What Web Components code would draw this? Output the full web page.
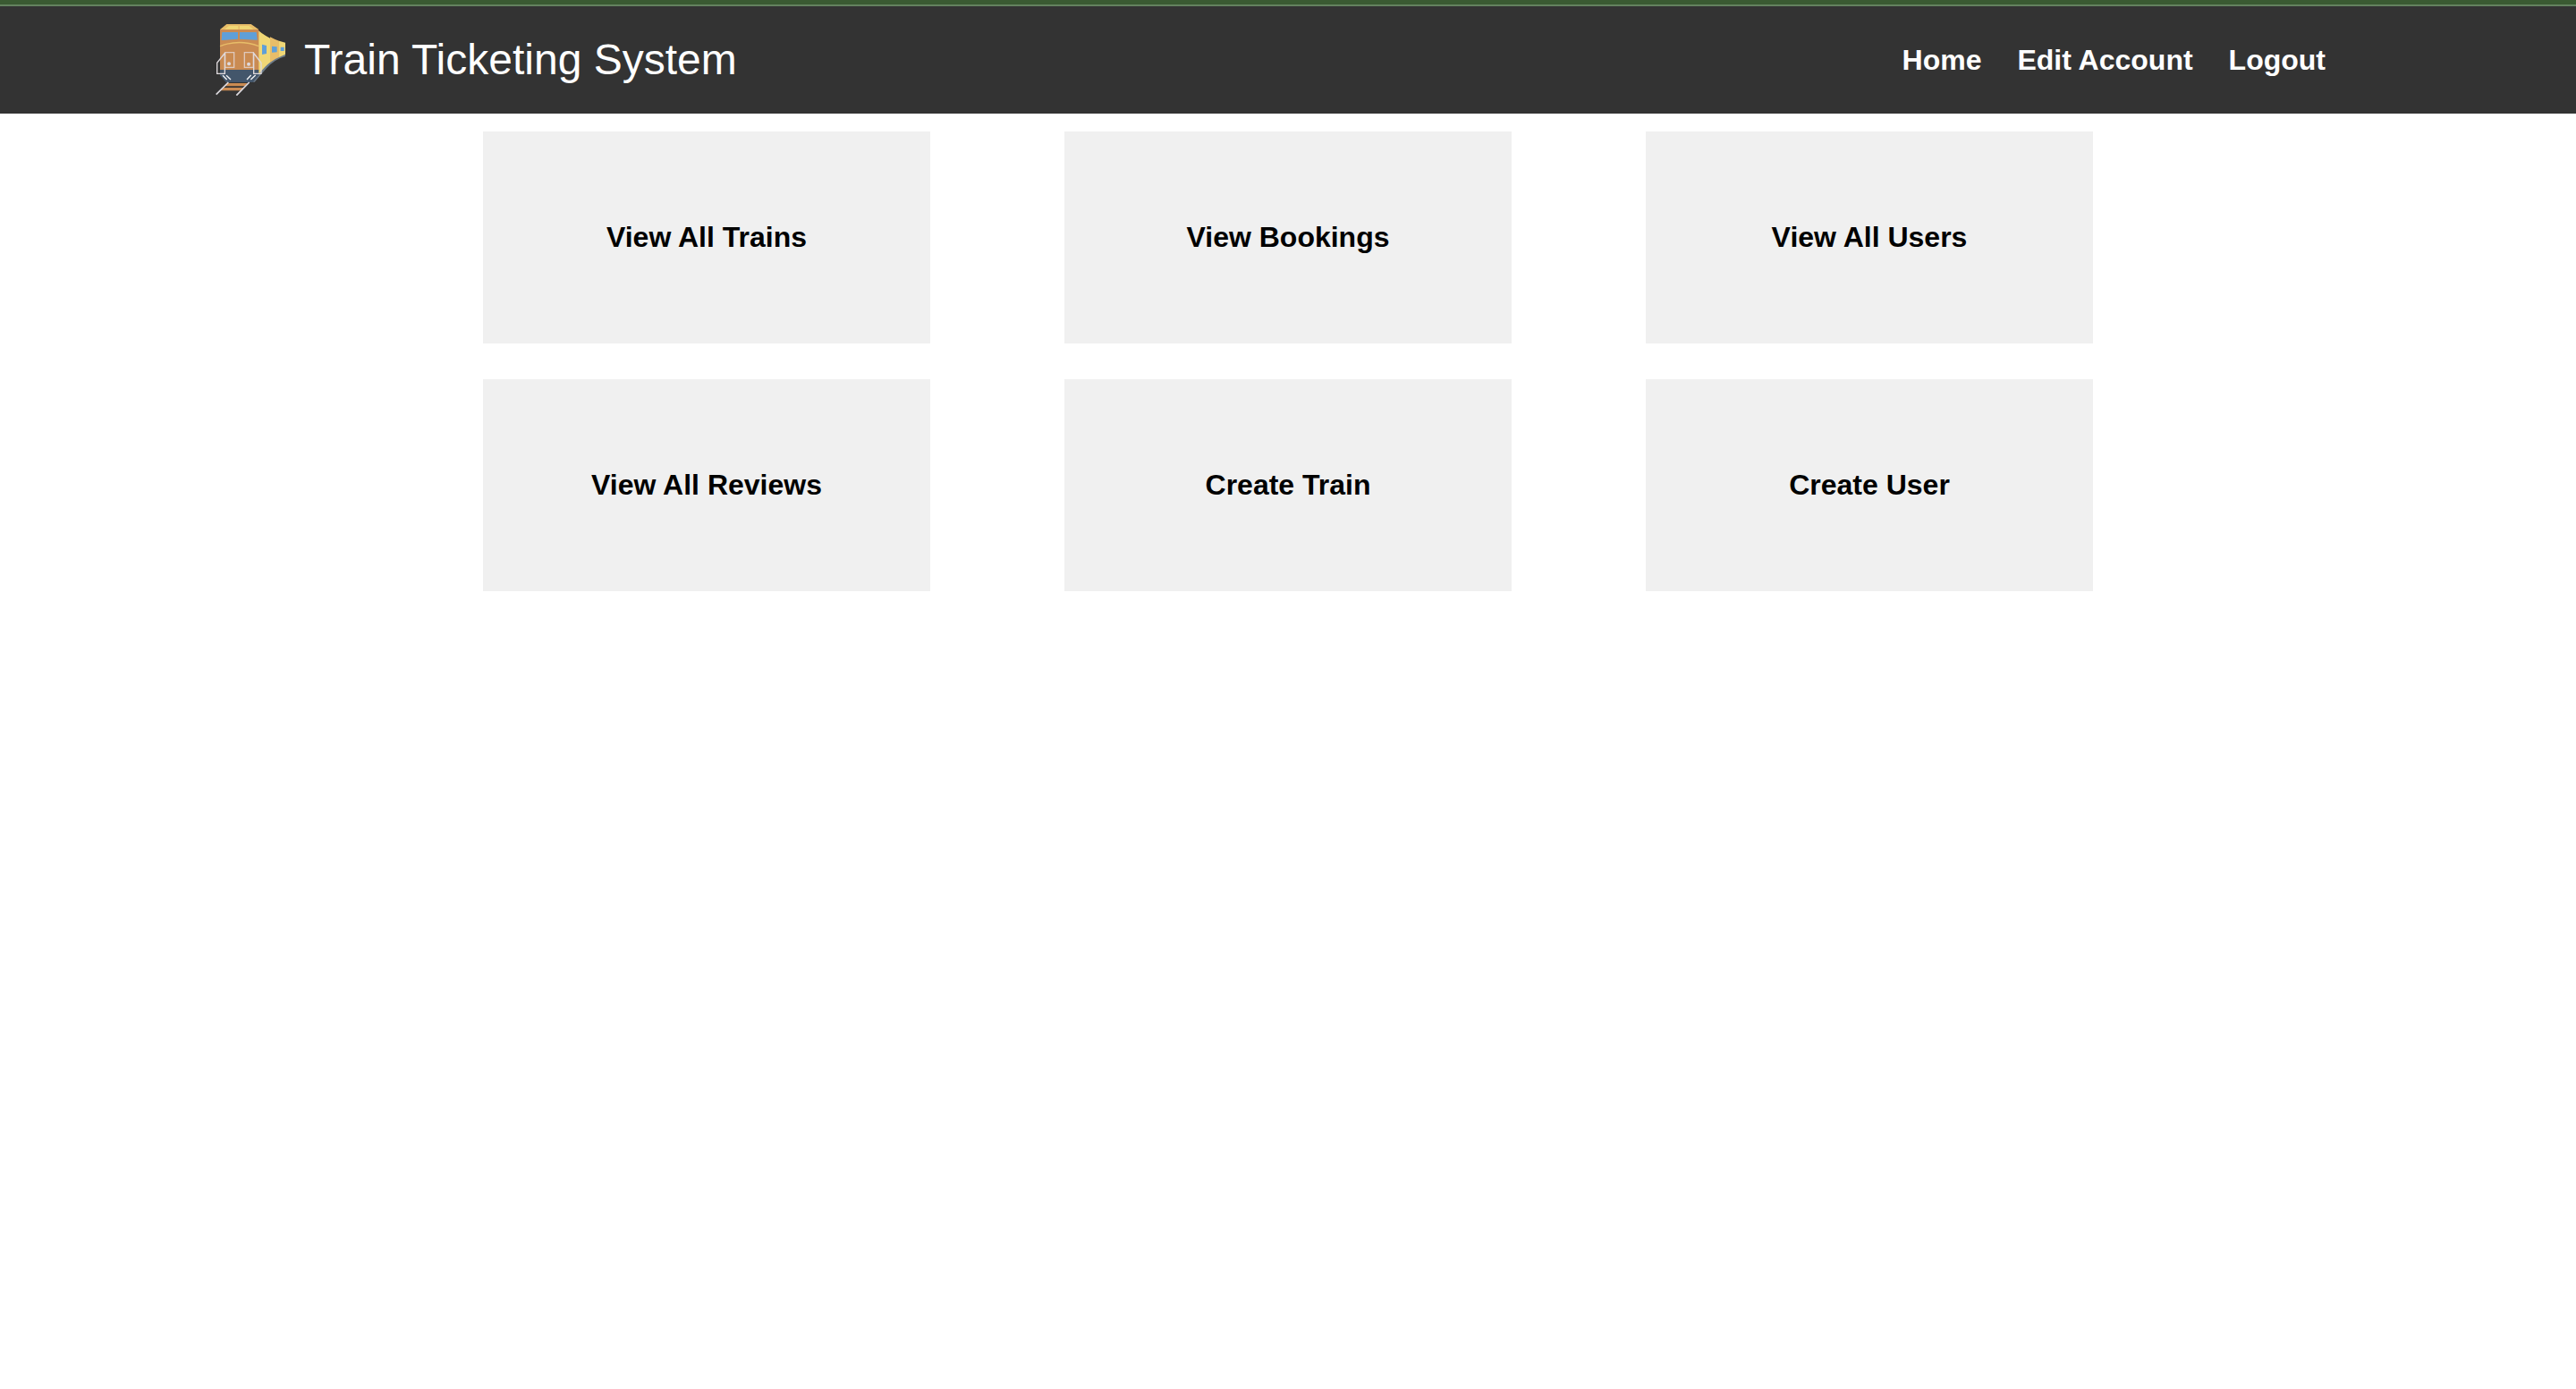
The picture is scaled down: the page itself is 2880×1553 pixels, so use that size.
<!DOCTYPE html>
<html lang="en">
<head>
<meta charset="utf-8">
<meta name="viewport" content="width=device-width, initial-scale=1">
<title>Train Ticketing System</title>
<style>
  body { margin: 0; background: #fff; color: #000; font-family: Arial, "Liberation Sans", sans-serif; }
</style>
</head>
<body>
<site-header>
  <train-logo slot="logo"></train-logo>
  <span slot="title">Train Ticketing System</span>
  <nav-link slot="nav" href="#home">Home</nav-link>
  <nav-link slot="nav" href="#account">Edit Account</nav-link>
  <nav-link slot="nav" href="#logout">Logout</nav-link>
</site-header>
<card-grid>
  <action-card href="#trains">View All Trains</action-card>
  <action-card href="#bookings">View Bookings</action-card>
  <action-card href="#users">View All Users</action-card>
  <action-card href="#reviews">View All Reviews</action-card>
  <action-card href="#create-train">Create Train</action-card>
  <action-card href="#create-user">Create User</action-card>
</card-grid>

<script>
class BaseElement extends HTMLElement {
  constructor() {
    super();
    this.attachShadow({ mode: "open" }).innerHTML = this.constructor.markup;
  }
  connectedCallback() {
    const link = this.shadowRoot.querySelector("a");
    if (link) link.href = this.getAttribute("href") || "#";
  }
}

customElements.define("site-header", class extends BaseElement {
  static markup = `
    <style>
      :host { display: block; background: #333; color: #fff; border-top: 5px solid #3a5a32; }
      header { border-top: 2px solid #64825f; padding: 20px 0; }
      .bar { max-width: 2400px; margin: 0 auto; display: flex; align-items: center; justify-content: space-between; }
      .brand { display: flex; align-items: center; gap: 20px; }
      h1 { margin: 0; font-size: 48px; font-weight: 400; line-height: 56px; }
      nav { display: flex; gap: 40px; padding-right: 40px; }
    </style>
    <header><div class="bar">
      <div class="brand"><slot name="logo"></slot><h1><slot name="title"></slot></h1></div>
      <nav aria-label="Main"><slot name="nav"></slot></nav>
    </div></header>`;
});

customElements.define("nav-link", class extends BaseElement {
  static markup = `
    <style>
      :host { display: block; }
      a { display: block; color: #fff; text-decoration: none; font-size: 32px; font-weight: 700; line-height: 37px; }
    </style>
    <a><slot></slot></a>`;
});

customElements.define("card-grid", class extends BaseElement {
  static markup = `
    <style>
      :host { display: block; }
      main { max-width: 1800px; margin: 20px auto; display: grid; grid-template-columns: repeat(3, minmax(0, 500px)); justify-content: space-between; row-gap: 40px; }
    </style>
    <main><slot></slot></main>`;
});

customElements.define("action-card", class extends BaseElement {
  static markup = `
    <style>
      :host { display: block; }
      a { display: block; padding: 100px 20px; background: #f0f0f0; color: #000; text-align: center; text-decoration: none; }
      h2 { margin: 0; font-size: 32px; font-weight: 700; line-height: 37px; }
    </style>
    <a><h2><slot></slot></h2></a>`;
});

customElements.define("train-logo", class extends BaseElement {
  static markup = `
    <style>
      :host { display: block; }
      svg { display: block; width: 80px; height: 80px; }
    </style>
    <svg viewBox="30 36 240 240" aria-hidden="true">
      <!-- carriages -->
      <path fill="#6c7b89" d="M158 230 L178 190 Q218 154 267 136 V144 Q232 153 204 184 Q184 207 164 230Z"/>
      <path fill="#f0d775" d="M160 43 Q188 70 216 83 V164 Q198 177 178 204Z"/>
      <path fill="#e8bd69" d="M216 79 Q230 87 246 92 V147 Q230 153 216 164Z"/>
      <path fill="#f0d775" d="M246 92 L267 98 V137 L246 147Z"/>
      <path fill="#5f9fd8" d="M189 104 L204 108 V135 L189 138Z M222 110 L239 112 V130 L222 131Z M251 113 H263 V126 H251Z"/>
      <!-- engine -->
      <path fill="#e8bd69" d="M48 54 L70 36 H152 L178 54Z"/>
      <path fill="#f0d775" d="M63 53 L78 42 H109 V53Z M114 42 H145 L160 53 H114Z"/>
      <path fill="#ca8b52" d="M48 54 H176 L178 58 V192 H48Z"/>
      <path fill="#5f9fd8" d="M55 63 H108 V86 L53 90Z M114 63 H170 L173 89 L114 86Z"/>
      <path fill="none" stroke="#e8bd69" stroke-width="4" d="M48 110 Q112 85 178 110"/>
      <path fill="#43566b" d="M48 189 H178 V208 L158 231 H68 L48 208Z"/>
      <!-- railings and lamps -->
      <g fill="none" stroke="#dfdadd" stroke-width="4">
        <path stroke="#dfc9bd" d="M65 131 H95 V181 H65Z M130 131 H160 V181 H130Z"/>
        <path d="M65 132 L38 166 V202 H64 V132 M160 132 L186 166 V202 H161 V132"/>
      </g>
      <circle cx="78" cy="169" r="6" fill="#ded9dd"/>
      <circle cx="144" cy="170" r="6" fill="#ded9dd"/>
      <path stroke="#f4f5f6" stroke-width="4" d="M57 208 L71 222 M69 208 L84 222 M152 207 L138 222 M167 207 L151 222"/>
      <!-- track -->
      <path fill="#ca8b52" d="M72 234 H140 L131 244 H62Z M59 249 H127 L119 259 H50Z"/>
      <path stroke="#dedbe0" stroke-width="5" d="M76 231 L35 272 M146 231 L103 275"/>
    </svg>`;
});
</script>
</body>
</html>
